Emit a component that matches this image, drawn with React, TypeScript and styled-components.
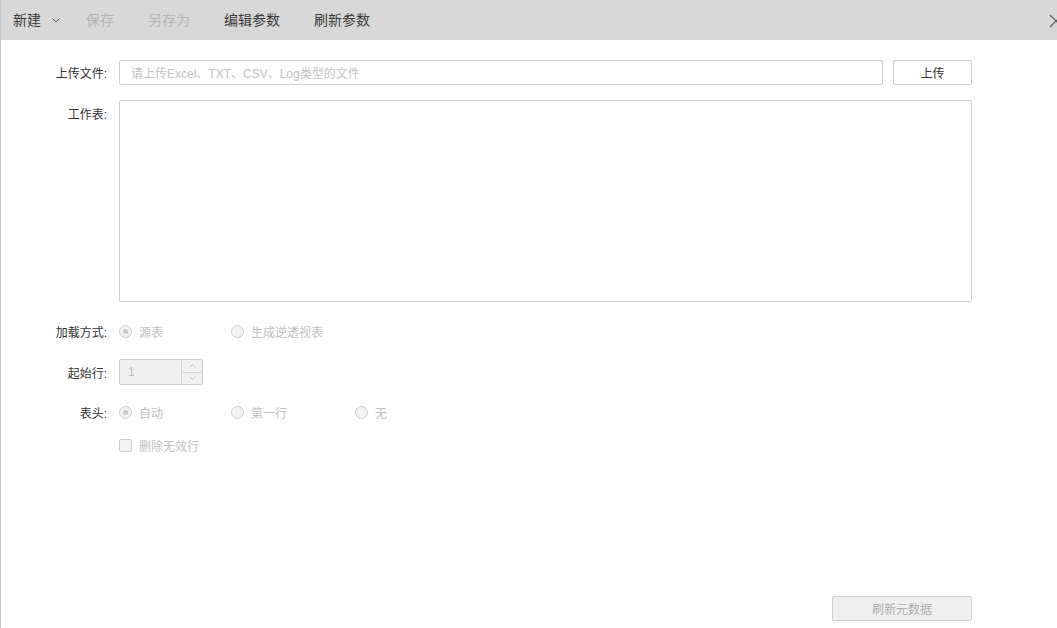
import React from "react";
import styled, { createGlobalStyle } from "styled-components";

const Global = createGlobalStyle`
  html, body { margin: 0; padding: 0; background: #fff; overflow: hidden; }
  body { font-family: "Liberation Sans", "Noto Sans CJK SC", sans-serif; }
  * { box-sizing: border-box; }
`;

const Page = styled.div`
  width: 1057px;
  height: 628px;
  display: flex;
  flex-direction: column;
  border-left: 1px solid #c6c6c6;
  position: relative;
  overflow: hidden;
`;

const Toolbar = styled.div`
  height: 40px;
  flex: none;
  background: #d8d8d8;
  display: flex;
  align-items: center;
  padding-left: 12px;
  position: relative;
`;

const MenuItem = styled.div<{ $disabled?: boolean; $gap?: number }>`
  font-size: 14px;
  color: ${(p) => (p.$disabled ? "#b4b4b4" : "#3a3a3a")};
  margin-right: ${(p) => p.$gap ?? 34}px;
  display: flex;
  align-items: center;
  gap: 11px;
  line-height: 20px;
`;

const Close = styled.svg`
  position: absolute;
  right: -6px;
  top: 14px;
`;

const Body = styled.div`
  flex: 1;
  display: flex;
  flex-direction: column;
  padding: 20px 85px 7px 0;
`;

const Row = styled.div<{ $mt?: number; $align?: string }>`
  display: grid;
  grid-template-columns: 106px 1fr;
  column-gap: 12px;
  align-items: ${(p) => p.$align ?? "center"};
  margin-top: ${(p) => p.$mt ?? 0}px;
`;

const Label = styled.div<{ $pt?: number }>`
  font-size: 12px;
  color: #333;
  text-align: right;
  padding-top: ${(p) => p.$pt ?? 0}px;
`;

const Inline = styled.div`
  display: flex;
  align-items: center;
  gap: 10px;
`;

const TextInput = styled.div`
  flex: 1;
  height: 25px;
  border: 1px solid #cfcfcf;
  border-radius: 2px;
  font-size: 12px;
  color: #c2c2c2;
  display: flex;
  align-items: center;
  padding-left: 11px;
`;

const Button = styled.div<{ $width: number; $disabled?: boolean }>`
  width: ${(p) => p.$width}px;
  height: 25px;
  border: 1px solid #cfcfcf;
  border-radius: 2px;
  font-size: 12px;
  color: ${(p) => (p.$disabled ? "#adadad" : "#333")};
  background: ${(p) => (p.$disabled ? "#efefef" : "#fff")};
  display: flex;
  align-items: center;
  justify-content: center;
`;

const TextArea = styled.div`
  height: 202px;
  border: 1px solid #cfcfcf;
  border-radius: 2px;
`;

const Options = styled.div`
  display: flex;
  align-items: center;
  height: 20px;
`;

const Option = styled.div<{ $width?: number }>`
  display: flex;
  align-items: center;
  gap: 7px;
  width: ${(p) => (p.$width ? `${p.$width}px` : "auto")};
  font-size: 12px;
  color: #c0c0c0;
`;

const RadioCircle = styled.span<{ $checked?: boolean }>`
  width: 13px;
  height: 13px;
  border-radius: 50%;
  border: 1px solid #cdcdcd;
  background: #f3f3f3;
  display: flex;
  align-items: center;
  justify-content: center;
  &::after {
    content: "";
    width: 5px;
    height: 5px;
    border-radius: 50%;
    background: ${(p) => (p.$checked ? "#c8c8c8" : "transparent")};
  }
`;

const CheckBox = styled.span`
  width: 13px;
  height: 13px;
  border: 1px solid #cdcdcd;
  border-radius: 2px;
  background: #f3f3f3;
`;

const Spinner = styled.div`
  width: 84px;
  height: 26px;
  border: 1px solid #cfcfcf;
  border-radius: 2px;
  background: #f0f0f0;
  display: flex;
`;

const SpinValue = styled.div`
  flex: 1;
  font-size: 12px;
  color: #bdbdbd;
  display: flex;
  align-items: center;
  padding-left: 8px;
`;

const SpinButtons = styled.div`
  width: 21px;
  border-left: 1px solid #d4d4d4;
  display: flex;
  flex-direction: column;
`;

const SpinBtn = styled.div<{ $top?: boolean }>`
  flex: 1;
  display: flex;
  align-items: center;
  justify-content: center;
  border-bottom: ${(p) => (p.$top ? "1px solid #d4d4d4" : "none")};
`;

const Footer = styled.div`
  margin-top: auto;
  display: flex;
  justify-content: flex-end;
`;

const Chevron = ({ up }: { up?: boolean }) => (
  <svg width="7" height="4" viewBox="0 0 7 4">
    <path
      d={up ? "M0.5 3.5 L3.5 0.5 L6.5 3.5" : "M0.5 0.5 L3.5 3.5 L6.5 0.5"}
      fill="none"
      stroke="#c4c4c4"
      strokeWidth="1"
    />
  </svg>
);

export default function App() {
  return (
    <>
      <Global />
      <Page>
        <Toolbar>
          <MenuItem $gap={26}>
            新建
            <svg width="8" height="5" viewBox="0 0 8 5">
              <path d="M0.5 0.5 L4 4 L7.5 0.5" fill="none" stroke="#555" strokeWidth="1" />
            </svg>
          </MenuItem>
          <MenuItem $disabled>保存</MenuItem>
          <MenuItem $disabled>另存为</MenuItem>
          <MenuItem>编辑参数</MenuItem>
          <MenuItem>刷新参数</MenuItem>
          <Close width="14" height="14" viewBox="0 0 14 14">
            <path d="M1 1 L13 13 M13 1 L1 13" stroke="#555" strokeWidth="1.1" fill="none" />
          </Close>
        </Toolbar>
        <Body>
          <Row>
            <Label>上传文件:</Label>
            <Inline>
              <TextInput>请上传Excel、TXT、CSV、Log类型的文件</TextInput>
              <Button $width={79}>上传</Button>
            </Inline>
          </Row>
          <Row $mt={15} $align="start">
            <Label $pt={5}>工作表:</Label>
            <TextArea />
          </Row>
          <Row $mt={19}>
            <Label>加载方式:</Label>
            <Options>
              <Option $width={112}>
                <RadioCircle $checked />
                源表
              </Option>
              <Option>
                <RadioCircle />
                生成逆透视表
              </Option>
            </Options>
          </Row>
          <Row $mt={18}>
            <Label>起始行:</Label>
            <div>
              <Spinner>
                <SpinValue>1</SpinValue>
                <SpinButtons>
                  <SpinBtn $top>
                    <Chevron up />
                  </SpinBtn>
                  <SpinBtn>
                    <Chevron />
                  </SpinBtn>
                </SpinButtons>
              </Spinner>
            </div>
          </Row>
          <Row $mt={17}>
            <Label>表头:</Label>
            <Options>
              <Option $width={112}>
                <RadioCircle $checked />
                自动
              </Option>
              <Option $width={124}>
                <RadioCircle />
                第一行
              </Option>
              <Option>
                <RadioCircle />
                无
              </Option>
            </Options>
          </Row>
          <Row $mt={13}>
            <div />
            <Options>
              <Option>
                <CheckBox />
                删除无效行
              </Option>
            </Options>
          </Row>
          <Footer>
            <Button $width={140} $disabled>
              刷新元数据
            </Button>
          </Footer>
        </Body>
      </Page>
    </>
  );
}
